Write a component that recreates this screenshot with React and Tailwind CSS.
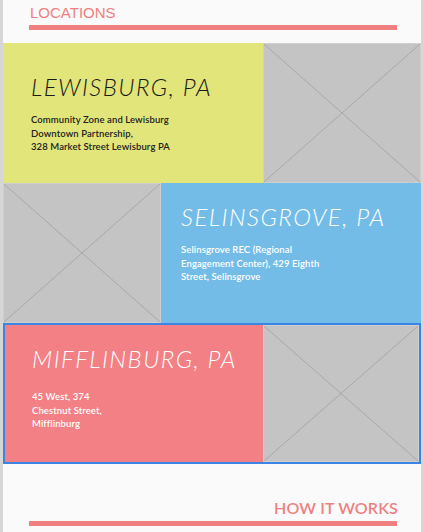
const Placeholder = ({ className }) => (
    <div className={`relative bg-[#c4c4c4] border border-[#cfcfcf] ${className}`}>
        <svg className="absolute inset-0 h-full w-full" preserveAspectRatio="none" viewBox="0 0 100 100">
            <line x1="0" y1="0" x2="100" y2="100" stroke="#a8a8a8" strokeWidth="1" vectorEffect="non-scaling-stroke" />
            <line x1="100" y1="0" x2="0" y2="100" stroke="#a8a8a8" strokeWidth="1" vectorEffect="non-scaling-stroke" />
        </svg>
    </div>
)

const City = ({ name, children, dark, className, gap }) => (
    <div className={`h-full ${className}`}>
        <h2
            className={`text-[24px] leading-none font-light italic tracking-[0.06em] ${dark ? 'text-[#1a1a1a]' : 'text-white'}`}
            style={{ fontFamily: 'Lato, "Noto Sans", sans-serif' }}>
            {name}
        </h2>
        <p
            className={`${gap} text-[9.5px] leading-[13.5px] font-semibold tracking-[0.01em] ${dark ? 'text-[#222]' : 'text-white'}`}
            style={{ fontFamily: 'Lato, "Noto Sans", sans-serif' }}>
            {children}
        </p>
    </div>
)

export default function App() {
    return (
        <div className="h-[532px] w-[424px] overflow-hidden bg-[#fafafa] border-x-[3px] border-[#d6d6d6]">
            {/* Locations heading */}
            <div className="h-[43px] pt-[4px]">
                <h1
                    className="pl-[27px] text-[15px] leading-[18px] text-[#f08080]"
                    style={{ fontFamily: '"Liberation Sans", Arial, sans-serif' }}>
                    LOCATIONS
                </h1>
                <div className="ml-[26px] mt-[3px] h-[5px] w-[368px] bg-[#f08080]" />
            </div>

            {/* Lewisburg */}
            <div className="flex h-[140px]">
                <City name="LEWISBURG, PA" dark gap="mt-[14px]" className="w-[260px] bg-[#e1e57a] pl-[28px] pt-[32px]">
                    Community Zone and Lewisburg
                    <br />
                    Downtown Partnership,
                    <br />
                    328 Market Street Lewisburg PA
                </City>
                <Placeholder className="flex-1" />
            </div>

            {/* Selinsgrove */}
            <div className="flex h-[140px]">
                <Placeholder className="w-[158px]" />
                <City name="SELINSGROVE, PA" gap="mt-[14px]" className="flex-1 bg-[#74bce8] pl-[20px] pt-[22px]">
                    Selinsgrove REC (Regional
                    <br />
                    Engagement Center), 429 Eighth
                    <br />
                    Street, Selinsgrove
                </City>
            </div>

            {/* Mifflinburg */}
            <div className="flex h-[141px] border-2 border-[#3b86e4]">
                <City name="MIFFLINBURG, PA" gap="mt-[19px]" className="w-[258px] bg-[#f28084] pl-[27px] pt-[22px]">
                    45 West, 374
                    <br />
                    Chestnut Street,
                    <br />
                    Mifflinburg
                </City>
                <Placeholder className="flex-1" />
            </div>

            {/* How it works */}
            <div className="pt-[35px]">
                <h2
                    className="pr-[23px] text-right text-[16px] leading-[18px] font-semibold tracking-[0.01em] text-[#f08080]"
                    style={{ fontFamily: 'Lato, "Noto Sans", sans-serif' }}>
                    HOW IT WORKS
                </h2>
                <div className="ml-[26px] mt-[4px] h-[5px] w-[368px] bg-[#f08080]" />
            </div>
        </div>
    )
}
